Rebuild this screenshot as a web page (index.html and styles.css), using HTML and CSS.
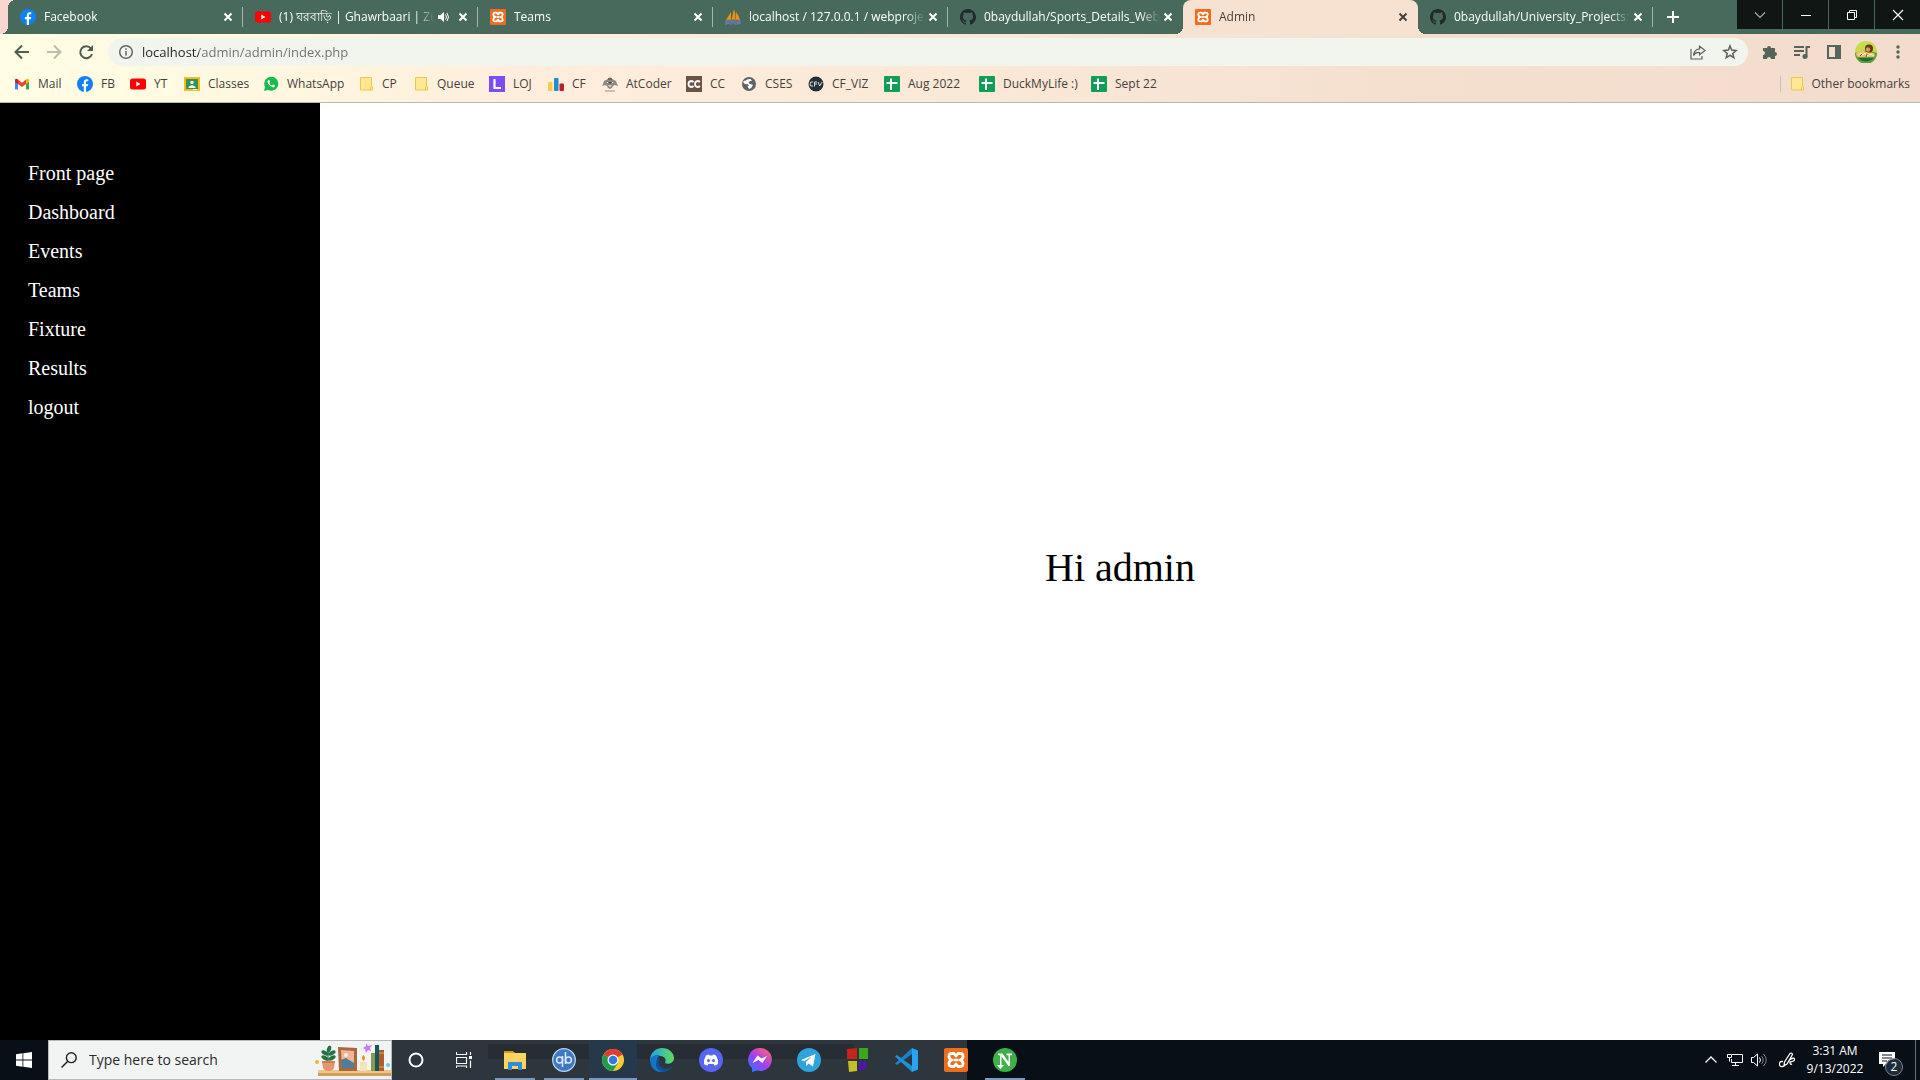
FILE: index.html
```html
<!DOCTYPE html>
<html lang="en">
<head>
<meta charset="utf-8">
<title>Admin</title>
<link rel="stylesheet" href="styles.css">
</head>
<body>
<svg class="sprite" aria-hidden="true">
  <symbol id="facebook" viewBox="0 0 16 16"><circle cx="8" cy="8" r="8" fill="#0f80f5"/><path d="M6.800 16v-5.700H4.900V8h1.900V6.400c0-2 1.100-3.200 3-3.200.6 0 1.200.1 1.500.2v1.900h-1c-1 0-1.300.6-1.300 1.200V8h2.200l-.4 2.300H9V16z" fill="#fff"/></symbol>
  <symbol id="youtube" viewBox="0 0 16 16"><rect y="2.500" width="16" height="11" rx="2.500" fill="#f00"/><path d="M6.300 5.600v4.800L10.500 8z" fill="#fff"/></symbol>
  <symbol id="xampp" viewBox="0 0 24 24"><rect width="24" height="24" rx="2" fill="#ec6d1d"/><path d="M8 12C4 11 4 5.500 7.500 5.500H10l2 2.500 2-2.500h2.500C20 5.500 20 11 16 12c4 1 4 6.500.5 6.500H14L12 16l-2 2.500H7.500C4 18.500 4 13 8 12z" fill="none" stroke="#fff" stroke-width="2.800" stroke-linejoin="round"/><path d="M9.500 12h5" stroke="#fff" stroke-width="2.500"/></symbol>
  <symbol id="github" viewBox="0 0 16 16"><path fill="#24292e" d="M8 0C3.580 0 0 3.580 0 8c0 3.540 2.290 6.530 5.470 7.590.4.070.55-.17.55-.38v-1.490c-2.230.48-2.700-.94-2.700-.94-.36-.93-.89-1.170-.89-1.170-.73-.5.050-.49.050-.49.800.06 1.230.83 1.230.83.710 1.230 1.870.87 2.330.66.070-.52.280-.87.510-1.070-1.780-.2-3.640-.89-3.640-3.950 0-.87.310-1.590.82-2.150-.08-.2-.36-1.020.08-2.120 0 0 .67-.21 2.200.82a7.600 7.600 0 0 1 4 0c1.530-1.040 2.200-.82 2.200-.82.440 1.100.160 1.920.080 2.120.510.560.82 1.270.82 2.150 0 3.070-1.870 3.750-3.650 3.950.290.25.540.73.540 1.480v2.190c0 .21.150.46.550.38A8 8 0 0 0 8 0z"/></symbol>
  <symbol id="sheets" viewBox="0 0 16 16"><rect width="16" height="16" rx="1" fill="#0f9d58"/><path d="M6 2.500h2V6h5.500v2H8v6H6V8H2.500V6H6z" fill="#fff"/></symbol>
  <symbol id="folder" viewBox="0 0 16 16"><path d="M2.500 1.500h11v9.500c1-1 1.500.5 1 3H2.500z" fill="#ffe794" stroke="#ecc94b"/><path d="M12.500 11v3.500" stroke="#ecc94b"/></symbol>
  <symbol id="close" viewBox="0 0 16 16"><path d="m4.500 4.500 7 7m0-7-7 7" stroke="currentColor" stroke-width="2" fill="none"/></symbol>
</svg>

<header class="browser">
  <div class="strip">
    <div class="tabs">
      <div class="tab"><svg class="icon"><use href="#facebook"/></svg><span class="title">Facebook</span><button class="close" aria-label="Close Facebook"><svg class="icon"><use href="#close"/></svg></button></div>
      <div class="tab"><svg class="icon"><use href="#youtube"/></svg><span class="title">(1) ঘরবাড়ি | Ghawrbaari | Zu</span><svg class="icon" viewBox="0 0 16 16"><path d="M3 6h2.500L9 3v10L5.500 10H3z" fill="#fff"/><path d="M10.500 5.500q2 2.500 0 5M12 4q3 4 0 8" fill="none" stroke="#fff"/></svg><button class="close" aria-label="Close video"><svg class="icon"><use href="#close"/></svg></button></div>
      <div class="tab"><svg class="icon"><use href="#xampp"/></svg><span class="title">Teams</span><button class="close" aria-label="Close Teams"><svg class="icon"><use href="#close"/></svg></button></div>
      <div class="tab"><svg class="icon" viewBox="0 0 16 16"><path d="M1 11 6 3v8zM6.500 11 9 0q2 5 1.500 11zM11 11V3q3 4 4 8z" fill="#f29111"/><path d="M0 11.500q8-1.500 16 0" stroke="#777" fill="none"/><path d="M1 16v-3.500h3v2H1M6 16v-4h1l1 2 1-2h1v4M12 16v-3.500h3v2h-3" stroke="#6c78af" fill="none" stroke-width="1.300"/></svg><span class="title">localhost / 127.0.0.1 / webprojec</span><button class="close" aria-label="Close localhost"><svg class="icon"><use href="#close"/></svg></button></div>
      <div class="tab plain"><svg class="icon"><use href="#github"/></svg><span class="title">0baydullah/Sports_Details_Webs</span><button class="close" aria-label="Close Sports Details"><svg class="icon"><use href="#close"/></svg></button></div>
      <div class="tab plain active"><svg class="icon"><use href="#xampp"/></svg><span class="title">Admin</span><button class="close" aria-label="Close Admin"><svg class="icon"><use href="#close"/></svg></button></div>
      <div class="tab"><svg class="icon"><use href="#github"/></svg><span class="title">0baydullah/University_Projects: I</span><button class="close" aria-label="Close University Projects"><svg class="icon"><use href="#close"/></svg></button></div>
    </div>
    <button class="newtab" aria-label="New tab"><svg class="icon" viewBox="0 0 16 16"><path d="M8 2v12M2 8h12" stroke="#fff" stroke-width="2"/></svg></button>
    <div class="window">
      <button aria-label="Search tabs"><svg class="icon" viewBox="0 0 16 16"><path d="m3 5.500 5 5 5-5" fill="none" stroke="#aaa" stroke-width="1.200"/></svg></button>
      <button aria-label="Minimize"><svg class="icon" viewBox="0 0 16 16"><path d="M3 8.500h10" stroke="#fff"/></svg></button>
      <button aria-label="Restore"><svg class="icon" viewBox="0 0 16 16"><path d="M3.500 5.500h7v7h-7zM5.500 5.500v-2h7v7h-2" fill="none" stroke="#fff"/></svg></button>
      <button aria-label="Close window"><svg class="icon" viewBox="0 0 16 16"><path d="m3 3 10 10M13 3 3 13" stroke="#fff" stroke-width="1.200"/></svg></button>
    </div>
  </div>

  <div class="toolbar">
    <button aria-label="Back"><svg class="icon" viewBox="0 0 16 16"><path d="M15 8H2M8 1.500 1.500 8 8 14.500" fill="none" stroke="#4c5f52" stroke-width="2"/></svg></button>
    <button aria-label="Forward"><svg class="icon" viewBox="0 0 16 16"><path d="M1 8h13M8 1.500 14.500 8 8 14.500" fill="none" stroke="#b9bfac" stroke-width="2"/></svg></button>
    <button aria-label="Reload"><svg class="icon" viewBox="0 0 16 16"><path d="M13 4.500A6 6 0 1 0 14 10" fill="none" stroke="#4c5f52" stroke-width="2"/><path d="M15 1v6H9z" fill="#4c5f52"/></svg></button>
    <div class="address">
      <svg class="icon" viewBox="0 0 16 16"><circle cx="8" cy="8" r="6.300" fill="none" stroke="#5f6368" stroke-width="1.500"/><path d="M8 7v4.500M8 4.300v1.500" stroke="#5f6368" stroke-width="1.500"/></svg>
      <input class="url" type="text" aria-label="Address" value="localhost/admin/admin/index.php">
      <button aria-label="Share"><svg class="icon" viewBox="0 0 16 16"><path d="M1 5v10h11v-3" fill="none" stroke="#5a5f5c" stroke-width="1.200"/><path d="M9.500 2.200 15 6.500l-5.500 4.300V8.500Q5.500 8 3.500 11.500 4 5.500 9.500 4.800z" fill="none" stroke="#5a5f5c" stroke-width="1.200"/></svg></button>
      <button aria-label="Bookmark"><svg class="icon" viewBox="0 0 16 16"><path d="m8 2 1.700 4.100 4.500.4-3.400 2.900 1 4.300L8 11.400l-3.800 2.300 1-4.300L1.800 6.500l4.500-.4z" fill="none" stroke="#5a5f5c" stroke-width="1.500"/></svg></button>
    </div>
    <div class="tools">
      <button aria-label="Extensions"><svg class="icon" viewBox="0 0 16 16"><path d="M1 4h4a2 2 0 1 1 4 0h4v4a2 2 0 1 1 0 4v3H9a2 2 0 1 0-4 0H1v-4a2 2 0 1 0 0-4z" fill="#56655a"/></svg></button>
      <button aria-label="Media"><svg class="icon" viewBox="0 0 16 16"><path d="M0 3h10M0 7h10M0 11h6M12.500 13V3H16" fill="none" stroke="#56655a" stroke-width="2"/><circle cx="11" cy="12.500" r="2.500" fill="#56655a"/></svg></button>
      <button aria-label="Side panel"><svg class="icon" viewBox="0 0 16 16"><path d="M2 2h12v12H2z" fill="none" stroke="#56655a" stroke-width="2"/><path d="M9 2h5v12H9z" fill="#56655a"/></svg></button>
      <button aria-label="Profile"><svg class="avatar" viewBox="0 0 22 22"><circle cx="11" cy="11" r="11" fill="#c6dc4a"/><path d="M0 12q11-5 22 0a11 11 0 0 1-22 0" fill="#5ba33a"/><path d="M3 17h16a11 11 0 0 1-16 0" fill="#1e7030"/><path d="M1 12q5-4 10-1l8 1q2 3-1 4H3q-2-1-2-4" fill="#f0bd6a"/><circle cx="14" cy="7.500" r="4" fill="#67371b"/><circle cx="13" cy="8.500" r="2.200" fill="#d99a52"/><path d="m3 14 3-2 2 2 2-2 2 3 4-2 3 2" stroke="#fff3d8" fill="none"/><path d="m5 15 2-2m4 3 1-3" stroke="#9a5a25"/></svg></button>
      <button aria-label="Menu"><svg class="icon" viewBox="0 0 16 16"><g fill="#56655a"><circle cx="8" cy="3" r="1.700"/><circle cx="8" cy="8" r="1.700"/><circle cx="8" cy="13" r="1.700"/></g></svg></button>
    </div>
  </div>

  <nav class="bookmarks" aria-label="Bookmarks">
    <div class="marks">
      <a href="#"><svg class="icon" viewBox="0 0 16 16"><path d="M1 13.500V4l3 2v7.500z" fill="#4285f4"/><path d="M15 13.500V4l-3 2v7.500z" fill="#34a853"/><path d="m4 3.500 4 3.200 4-3.200V8l-4 3-4-3z" fill="#ea4335"/><path d="M1 6V3.800Q1.500 2 3.300 3L4 3.500V8z" fill="#c5221f"/><path d="M15 6V3.800Q14.500 2 12.700 3l-.7.5V8z" fill="#fbbc04"/></svg>Mail</a>
      <a href="#"><svg class="icon"><use href="#facebook"/></svg>FB</a>
      <a href="#"><svg class="icon"><use href="#youtube"/></svg>YT</a>
      <a href="#"><svg class="icon" viewBox="0 0 16 16"><path d="M0 1h16v14H0z" fill="#f6bc1c"/><path d="M2 3h12v10H2z" fill="#2f9456"/><circle cx="8" cy="6.500" r="1.700" fill="#fff"/><path d="M4.500 11q3.500-3.500 7 0v1h-7z" fill="#fff"/><path d="M9 13h4v1H9z" fill="#fff"/></svg>Classes</a>
      <a href="#"><svg class="icon" viewBox="0 0 16 16"><path d="m1 15 1-4a7 7 0 1 1 3 3z" fill="#16bd4c"/><path d="M5.500 4q-2 1.500 0 4.200t5 3.300q2-.8 1.300-2.200L10 8.500l-1 1Q7 8.700 6.300 7l.8-1-.8-2z" fill="#fff"/></svg>WhatsApp</a>
      <a href="#"><svg class="icon"><use href="#folder"/></svg>CP</a>
      <a href="#"><svg class="icon"><use href="#folder"/></svg>Queue</a>
      <a href="#"><svg class="icon" viewBox="0 0 16 16"><path d="M0 0h16v16H0z" fill="#7c4df3"/><path d="M5.500 3v9H12" stroke="#fff" stroke-width="2.200" fill="none"/></svg>LOJ</a>
      <a href="#"><svg class="icon" viewBox="0 0 16 16"><rect y="6" width="4.500" height="9" rx="1" fill="#fbc94b"/><rect x="6" y="2" width="4.500" height="13" rx="1" fill="#1e8fcb"/><rect x="11.500" y="7.500" width="4.500" height="7.500" rx="1" fill="#b8202b"/></svg>CF</a>
      <a href="#"><svg class="icon" viewBox="0 0 16 16"><path d="M5 3.500q3-4 6 0l3 1.500 1 3 1 2-3-1-2 1q-1 3-3 3t-3-3L3 9l-3 1 1-2 1-3z" fill="#8d8781"/><path d="M4.500 6h2l-1 1.500zM9.500 6h2l-1 1.500zM6 9.500h4l-2 1.500z" fill="#fff"/><path d="M6 2.500h4v1H6zM6 6l2 2 2-2" fill="#4a4643"/><path d="M3 15h10" stroke="#99938c"/></svg>AtCoder</a>
      <a href="#"><svg class="icon" viewBox="0 0 16 16"><path d="M0 0h16v16H0z" fill="#6b5344"/><path d="M7.500 6q-1-1-2.500-1-2.500.3-2.500 3T5 11q1.500 0 2.500-1M14 6q-1-1-2.500-1Q9 5.300 9 8t2.500 3q1.500 0 2.500-1" fill="none" stroke="#fff" stroke-width="1.800"/></svg>CC</a>
      <a href="#"><svg class="icon" viewBox="0 0 16 16"><circle cx="8" cy="8" r="7" fill="#5f6368"/><path d="M2 6q2 3 5 2l1 1.500-1.500 1L8 13q3-1 4-4-2-1-4-1.500Q7 6 9 5h2L9.500 3Q6 2.500 5 4.500 3 4 2 6z" fill="#fff"/></svg>CSES</a>
      <a href="#"><svg class="icon" viewBox="0 0 16 16"><circle cx="8" cy="8" r="7.500" fill="#24303a"/><path d="M5 6q-3-1-3 2t3 2M6.500 10.500V6H9M6.500 8H9M10 6l1.700 4L14 6" fill="none" stroke="#dadddf"/></svg>CF_VIZ</a>
      <a href="#"><svg class="icon"><use href="#sheets"/></svg>Aug 2022</a>
      <a href="#"><svg class="icon"><use href="#sheets"/></svg>DuckMyLife :)</a>
      <a href="#"><svg class="icon"><use href="#sheets"/></svg>Sept 22</a>
    </div>
    <a class="other" href="#"><svg class="icon"><use href="#folder"/></svg>Other bookmarks</a>
  </nav>
</header>

<div class="page">
  <nav class="sidebar" aria-label="Admin">
    <a href="#">Front page</a>
    <a href="#">Dashboard</a>
    <a href="#">Events</a>
    <a href="#">Teams</a>
    <a href="#">Fixture</a>
    <a href="#">Results</a>
    <a href="#">logout</a>
  </nav>
  <main class="greeting">Hi admin</main>
</div>

<footer class="taskbar">
  <button class="start" aria-label="Start"><svg class="icon" viewBox="0 0 16 16"><path d="m0 2.200 6.500-.9v6.300H0zM7.300 1.200 16 0v7.600H7.300zM0 8.400h6.500v6.300L0 13.800zM7.300 8.400H16V16l-8.700-1.200z" fill="#fff"/></svg></button>
  <div class="search">
    <svg class="icon" viewBox="0 0 16 16"><circle cx="10.300" cy="5.700" r="4.900" fill="none" stroke="#222" stroke-width="1.400"/><path d="M6.800 9.200.5 15.500" stroke="#222" stroke-width="1.500"/></svg>
    <input type="text" aria-label="Search" placeholder="Type here to search">
    <svg class="shelf" viewBox="314 1041 77 38">
      <path d="M318 1070h73v3h-73z" fill="#efc68b"/><path d="M318 1073h73v3h-73z" fill="#d29d5c"/>
      <circle cx="317" cy="1062" r="2" fill="#f5b223"/><circle cx="388" cy="1065" r="2" fill="#63d0ec"/>
      <path d="M328 1062v-13" stroke="#1d5b3b"/><g fill="#257247"><ellipse cx="329" cy="1049" rx="2" ry="3.500" transform="rotate(20 329 1049)"/><ellipse cx="325" cy="1053" rx="4" ry="2" transform="rotate(30 325 1053)"/><ellipse cx="332" cy="1053" rx="4" ry="2" transform="rotate(-30 332 1053)"/><ellipse cx="325" cy="1058" rx="4" ry="2" transform="rotate(30 325 1058)"/><ellipse cx="332" cy="1058" rx="4" ry="2" transform="rotate(-30 332 1058)"/></g>
      <path d="M322 1061h13l-1 7q-1 3-5.500 3t-5.500-3z" fill="#e8956f"/><path d="M322 1061h13v2h-13z" fill="#d37b56"/>
      <path d="m338 1047 19 1v23l-18 0z" fill="#a9683b"/><path d="m341 1050 13 1v17l-12 0z" fill="#f0b49c"/><path d="m341 1060 5-2 8 5v5h-12z" fill="#4e7d9b"/><circle cx="346" cy="1055" r="2" fill="#fff3cf"/>
      <path d="M360 1062h7v9h-7z" fill="#f5e3b8"/><path d="M363.500 1055q3 3 0 6-3-3 0-6" fill="#f28b22"/>
      <path d="m366 1043 2 3 4-1-2 3 1 3-3-1-2 3-1-4-2-1 3-2z" fill="#c77df2"/>
      <path d="M371 1053h5v18h-5z" fill="#8a9a4c"/><path d="M375 1045h4l1 26h-5z" fill="#17575c"/><path d="M379 1050h5v21h-5z" fill="#b05c33"/><path d="M379 1053h5m-5 14h5" stroke="#e6a35c"/>
    </svg>
  </div>
  <div class="dock">
    <button aria-label="Cortana"><svg class="icon" viewBox="0 0 16 16"><circle cx="8" cy="8" r="6.500" fill="none" stroke="#fff" stroke-width="2"/></svg></button>
    <button aria-label="Task view"><svg class="icon" viewBox="0 0 16 16"><path d="M.5 0v2.500h10V0M.5 5.500h10v6H.5zM.5 16v-2h10v2M14.500 0v3M14.500 8.500V16" fill="none" stroke="#fff" stroke-width="1.200"/><path d="M13 4h3v3h-3z" fill="#fff"/></svg></button>
  </div>
  <div class="dock apps">
    <button class="open" aria-label="File Explorer"><svg class="app" viewBox="0 0 24 24"><path d="M1 3h9l2 2v4H1z" fill="#d9940f"/><path d="M1 5h22v16H1z" fill="#fcd462"/><path d="M5 22v-8h14v8h-4v-4H9v4z" fill="#2f8fd6"/></svg></button>
    <button class="open" aria-label="qBittorrent"><svg class="app" viewBox="0 0 24 24"><circle cx="12" cy="12" r="11.300" fill="#3e78c4" stroke="#b8d4f4" stroke-width="1.300"/><path d="M10.500 8v11M13.500 4v12" stroke="#dbeafd" stroke-width="1.500"/><circle cx="7.600" cy="12" r="3" fill="none" stroke="#dbeafd" stroke-width="1.500"/><circle cx="16.400" cy="12" r="3" fill="none" stroke="#dbeafd" stroke-width="1.500"/></svg></button>
    <button class="open current" aria-label="Chrome"><svg class="app" viewBox="0 0 24 24"><circle cx="12" cy="12" r="11" fill="#fcc934"/><path d="M12 12 2.500 6.500a11 11 0 0 1 19 0z" fill="#e33b2e"/><path d="m12 12-9.500-5.500A11 11 0 0 0 12 23l5-8z" fill="#229a4b"/><circle cx="12" cy="12" r="5.500" fill="#fff"/><circle cx="12" cy="12" r="4.300" fill="#3577e5"/></svg></button>
    <button aria-label="Edge"><svg class="app" viewBox="0 0 24 24"><defs><linearGradient id="edge"><stop stop-color="#1fa4e8"/><stop offset="1" stop-color="#5fdc5a"/></linearGradient></defs><path d="M0 11C1 4 6 0 12 0c7 0 12 5 12 10 0 5-6 7-9 5 2-4-1-7-5-7q-6 0-10 3z" fill="url(#edge)"/><path d="M0 11q4-5 10-4-4 3-3 8 2 7 9 7-2 2-5 2C4 24 0 18 0 11z" fill="#1676c6"/><path d="M10 9q-4 8 3 11 5 2 10-2-4 6-11 6-7-3-6-9 1-5 4-6z" fill="#0e519b"/></svg></button>
    <button aria-label="Discord"><svg class="app" viewBox="0 0 24 24"><circle cx="12" cy="12" r="12" fill="#5865f2"/><path d="M7 7.500q2-1 3-1l.5 1h3l.5-1q1 0 3 1 2.500 4 2 8.500-2 1.500-3.500 1.500l-1-1.500h-5l-1 1.500Q7 17.500 5 16q-.5-4.500 2-8.500z" fill="#fff"/><circle cx="9.500" cy="12.500" r="1.500" fill="#5865f2"/><circle cx="14.500" cy="12.500" r="1.500" fill="#5865f2"/></svg></button>
    <button aria-label="Messenger"><svg class="app" viewBox="0 0 24 24"><defs><linearGradient id="msg" x1="0" y1="1" x2=".8" y2="0"><stop stop-color="#1688ff"/><stop offset=".5" stop-color="#a13cfa"/><stop offset="1" stop-color="#ff6077"/></linearGradient></defs><path d="M12 0a11.500 11.500 0 1 1-3 22.500L4 24v-4A11.500 11.500 0 0 1 12 0z" fill="url(#msg)"/><path d="m4.500 15 5-7.500 4 3 5.500-2.500-4.500 7-4-3z" fill="#fff"/></svg></button>
    <button aria-label="Telegram"><svg class="app" viewBox="0 0 24 24"><circle cx="12" cy="12" r="12" fill="#2fa3dc"/><path d="m4 12 14.500-6L16 18.500l-4.500-3-2 2.500-.8-4L15 8.500l-8 4.800z" fill="#fff"/></svg></button>
    <button aria-label="Code::Blocks"><svg class="app" viewBox="0 0 24 24"><path d="m1 1 10-1v11H1z" fill="#c9211e"/><path d="M13 0h9v11h-9z" fill="#38a91c"/><path d="M2 13h9v10l-8 1z" fill="#c5be27"/><path d="M13 13h8l-1 8-7 2z" fill="#4b18a5"/></svg></button>
    <button aria-label="Visual Studio Code"><svg class="app" viewBox="0 0 24 24"><path d="M17 0 0 15.500l2 1.500L17 6z" fill="#1682c5"/><path d="M17 24 0 8.500 2 7l15 11z" fill="#1f8fd6"/><path d="M17 0 23 2.500v19L17 24z" fill="#27a5ee"/></svg></button>
    <button aria-label="XAMPP"><svg class="app"><use href="#xampp"/></svg></button>
  </div>
  <div class="dock running">
    <button class="open" aria-label="Nox"><svg class="app" viewBox="0 0 24 24"><circle cx="12" cy="12" r="12" fill="#3db149"/><path d="M5 5.500h4.500l6 8.500V7.500l-2-.5V5.500H19V7l-2 .5V18h-1.500L8.500 8.500V17h2.500l-3.500 4L4 17h3V7.500L5 7z" fill="#fff"/></svg></button>
  </div>
  <div class="tray">
    <button aria-label="Show hidden icons"><svg class="icon" viewBox="0 0 16 16"><path d="m2.500 10.500 5.500-5.500 5.500 5.500" fill="none" stroke="#fff" stroke-width="1.300"/></svg></button>
    <button aria-label="Network"><svg class="icon" viewBox="0 0 16 16"><path d="M5 2.500h10.500v8H4.500V7M8.500 10.500v3M5 13.500h7M.5 2.500h4v3h-4zM2.500 5.500v4" fill="none" stroke="#fff"/></svg></button>
    <button aria-label="Volume"><svg class="icon" viewBox="0 0 16 16"><path d="M.5 5.500h2l4-3.500v12l-4-3.500h-2zM8.500 5.500q2 2.500 0 5" fill="none" stroke="#fff"/><path d="M10.500 4q3.500 4 0 8M12.500 2q5.500 6 0 12" fill="none" stroke="#777d83"/></svg></button>
    <button class="pen" aria-label="Windows Ink"><svg class="icon" viewBox="0 0 16 16"><path d="M5.500 10 11 1.500q2-1 2.500 1L8 12l-3 1.500zM4 9.500q-3.500-.5-3.500 2.500t3 2.500q2 0 3-2M10.500 8q4-3 5-1t-4.500 3q0 3 2 2" fill="none" stroke="#fff" stroke-width="1.300"/></svg></button>
    <div class="clock"><span>3:31 AM</span><span>9/13/2022</span></div>
    <button class="notices" aria-label="Notifications"><svg class="icon" viewBox="0 0 16 16"><path d="M0 0h16v12H7l-3 3v-3H0z" fill="#fff"/><path d="M3 3h10M3 6h10M3 9h5" stroke="#080f17"/></svg><span class="badge">2</span></button>
    <div class="peek"></div>
  </div>
</footer>
</body>
</html>
```
FILE: styles.css
```css
* { box-sizing: border-box; }

body {
  margin: 0;
  min-height: 100vh;
  display: flex;
  flex-direction: column;
  font: 12px/16px "Open Sans", "Noto Sans", sans-serif;
  background: #fff;
}

button {
  margin: 0;
  padding: 0;
  border: 0;
  background: none;
  color: inherit;
  font: inherit;
  display: flex;
  align-items: center;
  justify-content: center;
}

a { color: inherit; text-decoration: none; }
input { border: 0; padding: 0; outline: 0; min-width: 0; }

.sprite { display: none; }
.icon { width: 16px; height: 16px; flex: none; }
.app { width: 24px; height: 24px; flex: none; }
.avatar { width: 22px; height: 22px; }

/* Browser frame */
.browser {
  border-bottom: 1px solid #b0bfa5;
  background: linear-gradient(90deg, #fffde4, #fff7e0 15%, #ffeedd 26%, #fbe9d8 50%, #f5e0d0 72%, #f3dccd);
}

.strip {
  height: 34px;
  display: flex;
  padding-left: 8px;
  color: #fff;
  background:
    linear-gradient(#f9d6d0, #f9d6d0) 0 0 / 8px 26px no-repeat,
    radial-gradient(circle at 0 0, #f9d6d0 8px, #486a5c 8px) 0 26px / 8px 8px no-repeat,
    radial-gradient(circle at 8px 8px, #486a5c 8px, #f9d6d0 8px) 8px 0 / 8px 8px no-repeat,
    #486a5c;
}

.tabs {
  flex: 0 1 1645px;
  min-width: 0;
  display: grid;
  grid-template-columns: repeat(7, minmax(0, 1fr));
}

.tab {
  display: flex;
  align-items: center;
  padding: 0 7px 0 12px;
  background: linear-gradient(#a3b4ad, #a3b4ad) right 7px / 1px 20px no-repeat;
}

.title {
  flex: 1;
  min-width: 0;
  margin-left: 8px;
  overflow: hidden;
  white-space: nowrap;
  -webkit-mask-image: linear-gradient(90deg, #000 calc(100% - 20px), transparent);
  mask-image: linear-gradient(90deg, #000 calc(100% - 20px), transparent);
}

.tab .title + .icon { margin-right: 4px; }
.plain { background: none; }

.active {
  position: relative;
  border-radius: 8px 8px 0 0;
  background: #f7e2d2;
  color: #45413e;
}

.active::before,
.active::after {
  content: "";
  position: absolute;
  bottom: 0;
  width: 8px;
  height: 8px;
}

.active::before { right: 100%; background: radial-gradient(circle at 0 0, #486a5c 8px, #f7e2d2 8px); }
.active::after { left: 100%; background: radial-gradient(circle at 100% 0, #486a5c 8px, #f7e2d2 8px); }

.newtab { width: 40px; }

.window {
  margin-left: auto;
  height: 29px;
  display: flex;
  gap: 1px;
}

.window button { width: 45px; background: #101613; }

.toolbar {
  height: 36px;
  padding: 0 6px 0 14px;
  display: flex;
  align-items: center;
  gap: 16px;
}

.address {
  flex: 1;
  height: 28px;
  margin-left: -2px;
  padding: 0 10px;
  display: flex;
  align-items: center;
  gap: 16px;
  border-radius: 14px;
  background: #f2f5ed;
}

.url {
  flex: 1;
  margin-left: -8px;
  height: 20px;
  font: 13px/20px "Open Sans", "Noto Sans", sans-serif;
  color: transparent;
  background: linear-gradient(90deg, #202421 57px, #6c716d 57px);
  -webkit-background-clip: text;
  background-clip: text;
}

.tools {
  margin-left: -10px;
  display: flex;
  align-items: center;
}

.tools button { width: 32px; }

.bookmarks {
  height: 32px;
  padding: 0 10px 4px 14px;
  display: flex;
  align-items: center;
  justify-content: space-between;
  color: #45413e;
}

.bookmarks a {
  display: flex;
  align-items: center;
  gap: 8px;
  white-space: nowrap;
}

.marks {
  display: grid;
  grid-template-columns: 63px 53px 54px 79px 95px 55px 76px 59px 54px 84px 55px 67px 76px 95px 112px auto;
}

.bookmarks .other { gap: 6px; padding-left: 8px; border-left: 1px solid #c9bfb0; }

/* Admin page */
.page {
  flex: 1;
  display: flex;
  font-family: "Liberation Serif", serif;
}

.sidebar {
  width: 320px;
  padding: 51px 28px;
  background: #000;
  color: #fff;
  font-size: 20px;
  line-height: 39px;
}

.sidebar a { display: block; }

.greeting {
  flex: 1;
  display: grid;
  place-items: center;
  padding-bottom: 8px;
  font-size: 40px;
  line-height: 48px;
  color: #000;
}

/* Taskbar */
.taskbar {
  height: 40px;
  display: flex;
  background: #080f17;
  color: #fff;
}

.start { width: 48px; }

.search {
  width: 344px;
  padding-left: 12px;
  display: flex;
  align-items: center;
  gap: 12px;
  border: 1px solid #b9b9b9;
  background: #f2f3f3;
}

.search input {
  flex: 1;
  height: 24px;
  background: none;
  font: 14px/24px "Open Sans", "Noto Sans", sans-serif;
}

.search input::placeholder { color: #2b2b2b; opacity: 1; }
.shelf { width: 77px; height: 38px; }

.dock { display: flex; flex: none; background: #2d353d; }
.dock button { width: 48px; flex: none; }

.apps {
  width: 479px;
  padding-left: 3px;
  gap: 1px;
  background: linear-gradient(#262d34, #262d34) 0 4px / 366px 15px no-repeat, #2d353d;
}

.running { margin-left: 14px; background: none; }

.dock .open { background: linear-gradient(#7c99c4, #7c99c4) center bottom / 40px 2px no-repeat; }
.dock .current { background: linear-gradient(#7c99c4, #7c99c4) center bottom / 48px 2px no-repeat, #26394b; }

.tray {
  margin-left: auto;
  display: flex;
  align-items: center;
}

.tray button { width: 24px; height: 40px; }
.tray .pen { width: 32px; }

.clock {
  width: 64px;
  display: flex;
  flex-direction: column;
  align-items: center;
  line-height: 18px;
}

.tray .notices { position: relative; width: 40px; }

.badge {
  position: absolute;
  left: 19px;
  top: 19px;
  width: 16px;
  height: 16px;
  border-radius: 50%;
  outline: 1px solid #7d8791;
  background: #1c2c3a;
  line-height: 16px;
  text-align: center;
}

.peek {
  width: 5px;
  height: 40px;
  margin-left: 8px;
  border-left: 1px solid #6a7076;
}
```
